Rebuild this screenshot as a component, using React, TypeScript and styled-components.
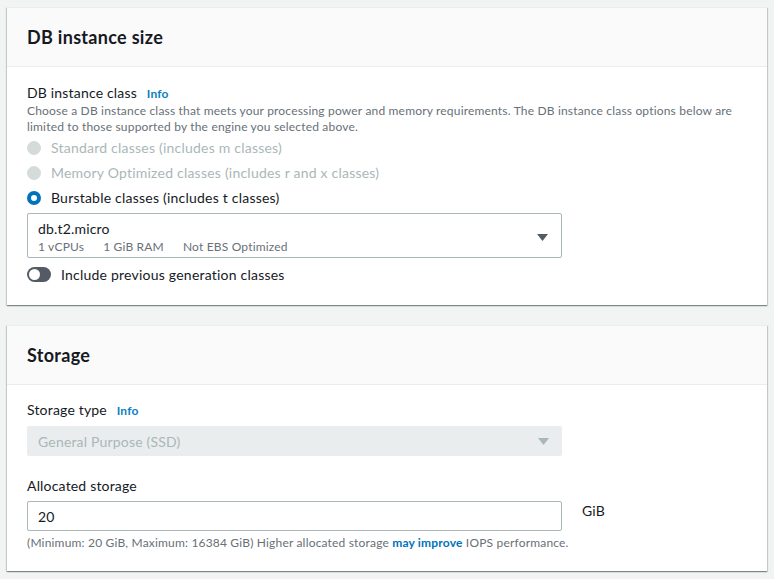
import React from 'react';
import styled, { createGlobalStyle } from 'styled-components';

const GlobalStyle = createGlobalStyle`
  html, body {
    margin: 0;
    padding: 0;
    background: #f2f3f3;
  }
  body {
    font-family: Lato, "Liberation Sans", Arial, sans-serif;
    color: #16191f;
    letter-spacing: 0.18px;
  }
`;

interface RadioOption {
  label: string;
  disabled: boolean;
  checked: boolean;
}

const classOptions: RadioOption[] = [
  { label: 'Standard classes (includes m classes)', disabled: true, checked: false },
  { label: 'Memory Optimized classes (includes r and x classes)', disabled: true, checked: false },
  { label: 'Burstable classes (includes t classes)', disabled: false, checked: true },
];

const Caret = ({ color }: { color: string }) => (
  <svg width="11" height="7" viewBox="0 0 11 7">
    <polygon points="0,0 11,0 5.5,7" fill={color} />
  </svg>
);

const App: React.FC = () => {
  return (
    <Page>
      <GlobalStyle />
      <Card>
        <CardHeader>
          <Title>DB instance size</Title>
        </CardHeader>
        <CardBody>
          <Label>
            DB instance class <Info>Info</Info>
          </Label>
          <Description>
            Choose a DB instance class that meets your processing power and memory requirements. The DB instance class options below are
            limited to those supported by the engine you selected above.
          </Description>
          <RadioGroup>
            {classOptions.map((opt, index) => (
              <RadioRow key={index} disabled={opt.disabled}>
                <RadioDot disabled={opt.disabled} checked={opt.checked} />
                {opt.label}
              </RadioRow>
            ))}
          </RadioGroup>
          <SelectBox>
            <SelectText>
              <SelectValue>db.t2.micro</SelectValue>
              <SelectMeta>
                <span>1 vCPUs</span>
                <span>1 GiB RAM</span>
                <span>Not EBS Optimized</span>
              </SelectMeta>
            </SelectText>
            <Caret color="#545b64" />
          </SelectBox>
          <ToggleRow>
            <Toggle>
              <Knob />
            </Toggle>
            Include previous generation classes
          </ToggleRow>
        </CardBody>
      </Card>

      <Card>
        <CardHeader>
          <Title>Storage</Title>
        </CardHeader>
        <StorageBody>
          <Label>
            Storage type <Info>Info</Info>
          </Label>
          <DisabledSelect>
            <span>General Purpose (SSD)</span>
            <Caret color="#aab7b8" />
          </DisabledSelect>
          <AllocatedLabel>Allocated storage</AllocatedLabel>
          <InputRow>
            <TextInput>20</TextInput>
            <Unit>GiB</Unit>
          </InputRow>
          <Hint>
            (Minimum: 20 GiB, Maximum: 16384 GiB) Higher allocated storage <HintLink>may improve</HintLink> IOPS performance.
          </Hint>
        </StorageBody>
      </Card>
    </Page>
  );
};

export default App;

const Page = styled.div`
  display: flex;
  flex-direction: column;
  gap: 20px;
  padding: 7px 7px 8px 7px;
`;

const Card = styled.section`
  width: 760px;
  background: #fff;
  border-top: 1px solid #eaeded;
  box-shadow: 0 1px 1px 0 rgba(0, 28, 36, 0.3), 1px 1px 1px 0 rgba(0, 28, 36, 0.15),
    -1px 1px 1px 0 rgba(0, 28, 36, 0.15);
`;

const CardHeader = styled.div`
  height: 58px;
  display: flex;
  align-items: center;
  padding: 0 20px;
  background: #fafafa;
  border-bottom: 1px solid #eaeded;
`;

const Title = styled.h2`
  margin: 0;
  font-size: 18px;
  font-weight: 700;
  line-height: 22px;
  letter-spacing: 0.3px;
  color: #16191f;
`;

const CardBody = styled.div`
  padding: 16px 20px 20px 20px;
`;

const StorageBody = styled.div`
  padding: 15px 20px 20px 20px;
`;

const Label = styled.div`
  font-size: 14px;
  line-height: 20px;
  color: #16191f;
`;

const Info = styled.a`
  margin-left: 6px;
  font-size: 12px;
  font-weight: 700;
  color: #0a7fc1;
  cursor: pointer;
`;

const Description = styled.div`
  font-size: 12px;
  line-height: 16px;
  color: #687078;
  margin-top: -1px;
`;

const RadioGroup = styled.div`
  display: flex;
  flex-direction: column;
`;

const RadioRow = styled.label<{ disabled: boolean }>`
  display: flex;
  align-items: center;
  gap: 10px;
  height: 25px;
  font-size: 14px;
  letter-spacing: 0.22px;
  color: ${({ disabled }) => (disabled ? '#aab7b8' : '#16191f')};
`;

const RadioDot = styled.span<{ disabled: boolean; checked: boolean }>`
  box-sizing: border-box;
  width: 14px;
  height: 14px;
  border-radius: 50%;
  background: ${({ disabled }) => (disabled ? '#d5dbdb' : '#fff')};
  border: ${({ disabled, checked }) =>
    disabled ? '1px solid #d5dbdb' : checked ? '4px solid #0073bb' : '2px solid #aab7b8'};
`;

const SelectBox = styled.div`
  margin-top: 3px;
  width: 535px;
  box-sizing: border-box;
  height: 45px;
  border: 1px solid #aab7b8;
  border-radius: 2px;
  padding: 4px 13px 1px 10px;
  display: flex;
  align-items: center;
  justify-content: space-between;
`;

const SelectText = styled.div`
  display: flex;
  flex-direction: column;
`;

const SelectValue = styled.div`
  font-size: 14px;
  line-height: 20px;
`;

const SelectMeta = styled.div`
  display: flex;
  gap: 19px;
  font-size: 12px;
  line-height: 16px;
  color: #687078;
`;

const ToggleRow = styled.div`
  margin-top: 5px;
  display: flex;
  align-items: center;
  gap: 10px;
  height: 22px;
  font-size: 14px;
  letter-spacing: 0.22px;
`;

const Toggle = styled.span`
  box-sizing: border-box;
  width: 24px;
  height: 15px;
  border-radius: 8px;
  background: #545b64;
  padding: 2px;
  display: flex;
  align-items: center;
`;

const Knob = styled.span`
  width: 11px;
  height: 11px;
  border-radius: 50%;
  background: #fff;
`;

const DisabledSelect = styled.div`
  margin-top: 5px;
  width: 535px;
  height: 30px;
  box-sizing: border-box;
  background: #eaeded;
  border-radius: 2px;
  padding: 0 13px 0 11px;
  display: flex;
  align-items: center;
  justify-content: space-between;
  font-size: 14px;
  color: #aab7b8;
`;

const AllocatedLabel = styled(Label)`
  margin-top: 20px;
`;

const InputRow = styled.div`
  margin-top: 5px;
  display: flex;
  align-items: flex-start;
  gap: 20px;
`;

const TextInput = styled.div`
  width: 535px;
  height: 30px;
  box-sizing: border-box;
  border: 1px solid #aab7b8;
  border-radius: 2px;
  padding: 0 10px;
  display: flex;
  align-items: center;
  font-size: 14px;
`;

const Unit = styled.span`
  font-size: 14px;
  line-height: 20px;
`;

const Hint = styled.div`
  margin-top: 4px;
  font-size: 12px;
  line-height: 16px;
  color: #687078;
`;

const HintLink = styled.a`
  font-weight: 700;
  color: #0073bb;
`;
